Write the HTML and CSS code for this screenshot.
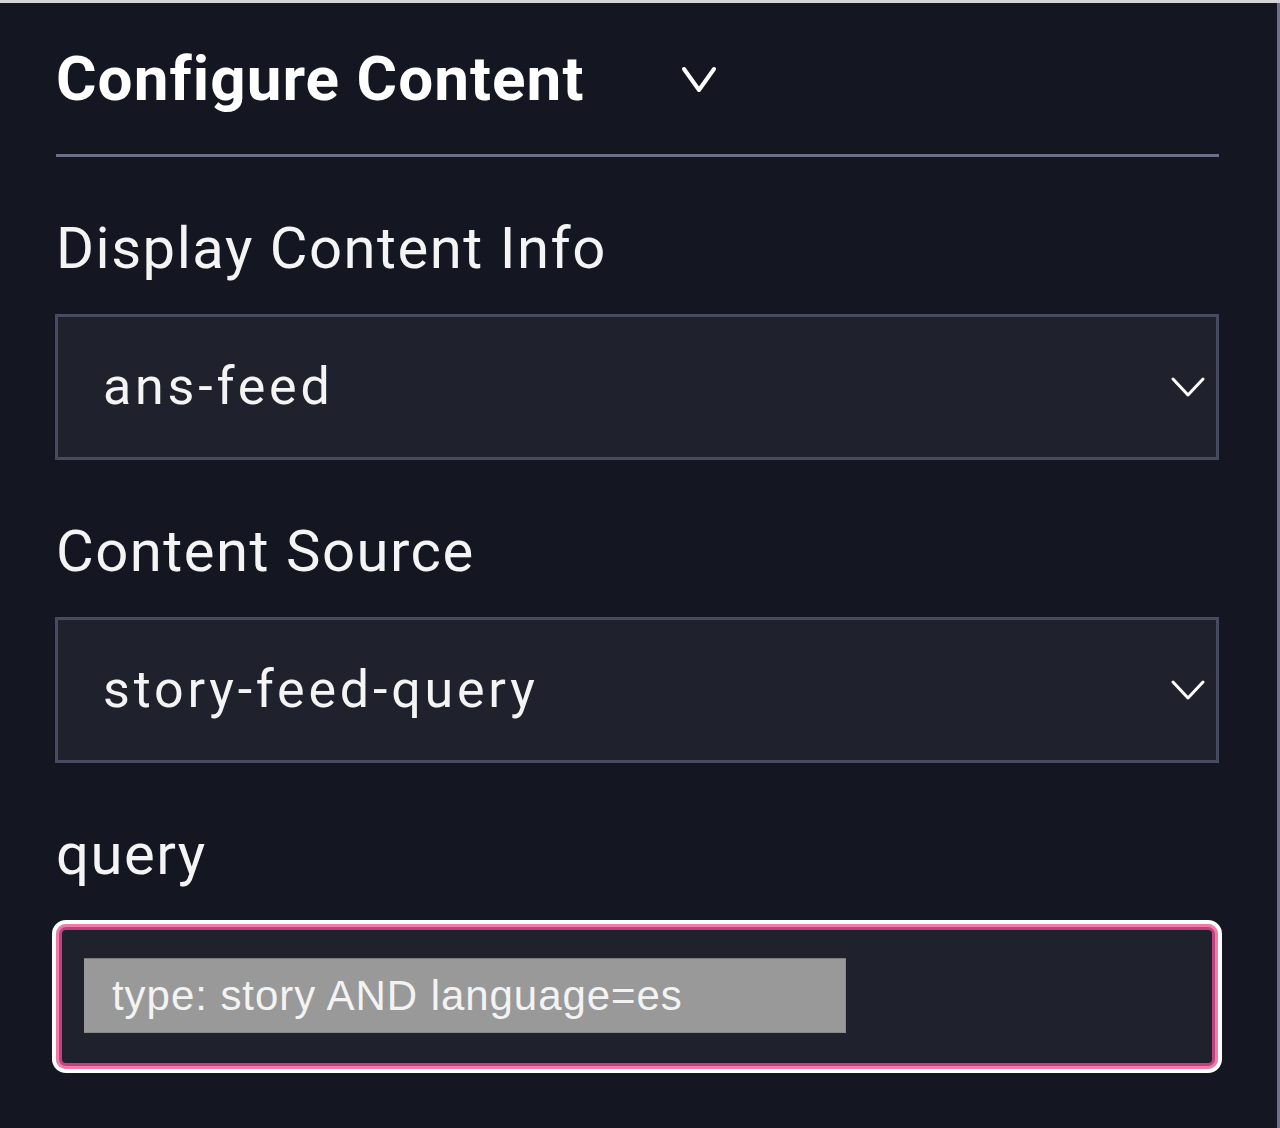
FILE: index.html
```html
<!DOCTYPE html>
<html lang="en">
<head>
<meta charset="utf-8">
<title>Configure Content</title>
<link rel="stylesheet" href="styles.css">
</head>
<body>
<div class="panel">
  <div class="header">
    <h1 class="title">Configure Content</h1>
    <svg class="title-chevron" width="40" height="30" viewBox="0 0 40 30" aria-hidden="true">
      <polyline points="4,4 19,25 34,4" fill="none" stroke="#ffffff" stroke-width="4" stroke-linecap="round" stroke-linejoin="round"/>
    </svg>
  </div>
  <div class="divider"></div>

  <div class="field">
    <div class="label">Display Content Info</div>
    <div class="select">
      <span class="select-value">ans-feed</span>
      <svg class="select-chevron" width="34" height="22" viewBox="0 0 34 22" aria-hidden="true">
        <polyline points="2,3 17,19 32,3" fill="none" stroke="#ffffff" stroke-width="3" stroke-linecap="round" stroke-linejoin="round"/>
      </svg>
    </div>
  </div>

  <div class="field">
    <div class="label">Content Source</div>
    <div class="select">
      <span class="select-value">story-feed-query</span>
      <svg class="select-chevron" width="34" height="22" viewBox="0 0 34 22" aria-hidden="true">
        <polyline points="2,3 17,19 32,3" fill="none" stroke="#ffffff" stroke-width="3" stroke-linecap="round" stroke-linejoin="round"/>
      </svg>
    </div>
  </div>

  <div class="field">
    <div class="label">query</div>
    <div class="query">
      <div class="query-text">type: story AND language=es</div>
    </div>
  </div>
</div>
</body>
</html>
```

FILE: styles.css
```css
html, body {
  margin: 0;
  padding: 0;
  background: #141621;
}

body {
  height: 1128px;
  overflow: hidden;
  border-top: 3px solid #d6d6d6;
  box-sizing: border-box;
}

.panel {
  box-sizing: border-box;
  height: 1125px;
  border-right: 3px solid #6e7288;
  padding: 0 58px 0 55px;
  font-family: Roboto, "Noto Sans", "Liberation Sans", sans-serif;
  color: #f4f4f4;
}

.header {
  display: flex;
  align-items: center;
  height: 151px;
  padding-left: 1px;
}

.title {
  margin: 0;
  font-size: 62px;
  font-weight: 700;
  line-height: 1;
  letter-spacing: 1.05px;
  color: #ffffff;
  width: 624px;
}

.title-chevron {
  display: block;
  margin-top: 2px;
}

.divider {
  height: 3px;
  background: #6a6f87;
  margin-left: 1px;
}

.field {
  margin-top: 61px;
}

.label {
  font-size: 58px;
  line-height: 60px;
  height: 60px;
  margin-bottom: 36px;
  padding-left: 1px;
  letter-spacing: 1.5px;
}

.select {
  box-sizing: border-box;
  height: 146px;
  border: 3px solid #464b5f;
  background: #1f212c;
  display: flex;
  align-items: center;
  justify-content: space-between;
  padding: 0 11px 0 45px;
}

.select-value {
  font-size: 52px;
  line-height: 1;
  letter-spacing: 3.8px;
}

.select-chevron {
  display: block;
}

.query {
  box-sizing: border-box;
  height: 153px;
  margin: 0 -3px;
  border: 4px solid #ffffff;
  border-radius: 14px;
  background: #1f212c;
  box-shadow: inset 0 0 0 3px #f27aa9, inset 0 0 0 6px #bd437e;
  padding: 34px 0 0 28px;
}

.query-text {
  box-sizing: border-box;
  width: 762px;
  height: 75px;
  background: #999999;
  border-top: 1px solid #7c7c7c;
  border-bottom: 1px solid #8a8a8a;
  border-right: 1px solid #8a8a8a;
  font-family: "Liberation Sans", Arial, sans-serif;
  font-size: 42px;
  line-height: 73px;
  letter-spacing: 0.95px;
  color: #f3f3f3;
  padding-left: 28px;
}
```
